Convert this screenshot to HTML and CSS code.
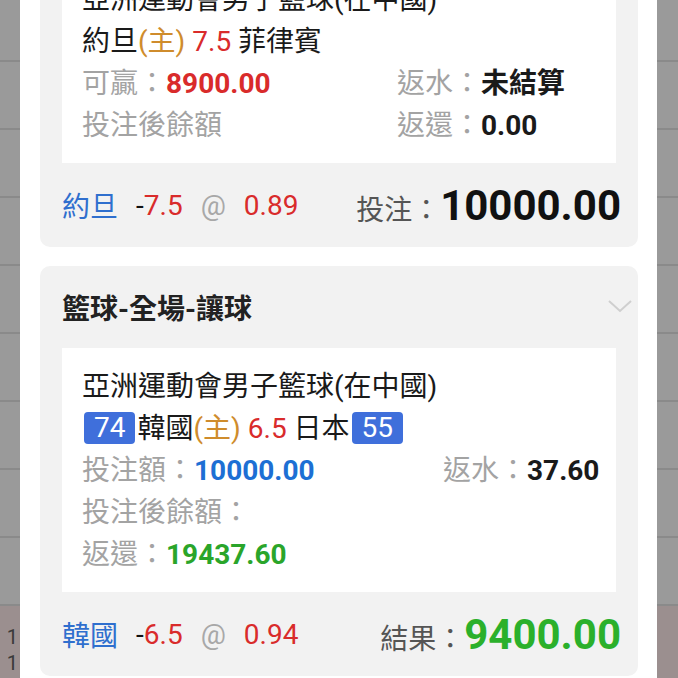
FILE: index.html
```html
<!DOCTYPE html>
<html lang="zh-Hant">
<head>
    <meta charset="UTF-8">
    <meta name="viewport" content="width=device-width, initial-scale=1.0">
    <title>注單詳情</title>
    <link rel="stylesheet" href="styles.css">
</head>
<body>
    <div class="screen">
        <div class="backdrop left">
            <div class="cell first"></div>
            <div class="cell"></div>
            <div class="cell"></div>
            <div class="cell"></div>
            <div class="cell"></div>
            <div class="cell"></div>
            <div class="cell"></div>
            <div class="cell"></div>
            <div class="cell"></div>
            <div class="cell last"><span>1</span><span>1</span></div>
        </div>

        <div class="panel">
            <div class="card cut">
                <div class="detail">
                    <div class="line">亞洲運動會男子籃球(在中國)</div>
                    <div class="line">約旦<span class="home">(主)</span> <span class="red">7.5</span> 菲律賓</div>
                    <div class="grid wide">
                        <div class="line"><span class="label">可贏：</span><b class="red">8900.00</b></div>
                        <div class="line"><span class="label">返水：</span><b>未結算</b></div>
                        <div class="line"><span class="label">投注後餘額</span></div>
                        <div class="line"><span class="label">返還：</span><b>0.00</b></div>
                    </div>
                </div>
                <div class="foot">
                    <div class="pick">
                        <span class="team">約旦</span>
                        <span class="odds">-<span class="red">7.5</span></span>
                        <span class="at">@</span>
                        <span class="red">0.89</span>
                    </div>
                    <div class="total"><span class="label">投注：</span><b>10000.00</b></div>
                </div>
            </div>

            <div class="card">
                <div class="head">
                    <h2>籃球-全場-讓球</h2>
                    <svg class="chevron" width="26" height="16" viewBox="0 0 26 16">
                        <polyline points="2,3 13,13 24,3" fill="none" stroke="#cfcfcf" stroke-width="2"/>
                    </svg>
                </div>
                <div class="detail">
                    <div class="line">亞洲運動會男子籃球(在中國)</div>
                    <div class="line"><span class="score">74</span>韓國<span class="home">(主)</span> <span class="red">6.5</span> 日本<span class="score">55</span></div>
                    <div class="grid narrow">
                        <div class="line"><span class="label">投注額：</span><b class="blue">10000.00</b></div>
                        <div class="line"><span class="label">返水：</span><b>37.60</b></div>
                        <div class="line"><span class="label">投注後餘額：</span></div>
                        <div class="line"></div>
                        <div class="line"><span class="label">返還：</span><b class="green">19437.60</b></div>
                    </div>
                </div>
                <div class="foot">
                    <div class="pick">
                        <span class="team">韓國</span>
                        <span class="odds">-<span class="red">6.5</span></span>
                        <span class="at">@</span>
                        <span class="red">0.94</span>
                    </div>
                    <div class="total"><span class="label">結果：</span><b class="green">9400.00</b></div>
                </div>
            </div>
        </div>

        <div class="backdrop right">
            <div class="cell first"></div>
            <div class="cell"></div>
            <div class="cell"></div>
            <div class="cell"></div>
            <div class="cell"></div>
            <div class="cell"></div>
            <div class="cell"></div>
            <div class="cell"></div>
            <div class="cell"></div>
            <div class="cell last"></div>
        </div>
    </div>
</body>
</html>
```

FILE: styles.css
```css
body {
    margin: 0;
    padding: 0;
    font-family: Roboto, "Noto Sans CJK TC", sans-serif;
    color: #1a1a1a;
    background: #fff;
}
.screen {
    display: flex;
    height: 678px;
    overflow: hidden;
}
.backdrop {
    display: flex;
    flex-direction: column;
    flex-shrink: 0;
    background: #9a9a9a;
}
.backdrop.left {
    width: 20px;
}
.backdrop.right {
    width: 21px;
}
.cell {
    height: 66px;
    border-bottom: 2px solid #8a8a8a;
}
.cell.first {
    height: 60px;
}
.cell.last {
    flex: 1;
    border-bottom: none;
    background: #9b8f8f;
    display: flex;
    flex-direction: column;
    align-items: flex-end;
    padding: 18px 2px 0 0;
    font-size: 20px;
    line-height: 26px;
    color: #3a3a3a;
}
.panel {
    flex: 1;
    min-width: 0;
    background: #fff;
    padding: 0 19px 0 20px;
}
.card {
    background: #f2f2f2;
    border-radius: 10px;
    margin-bottom: 19px;
}
.card.cut {
    margin-top: -39px;
}
.head {
    height: 82px;
    display: flex;
    align-items: center;
    justify-content: space-between;
    padding: 0 5px 0 22px;
}
.head h2 {
    margin: 0;
    font-size: 28px;
    font-weight: bold;
    color: #222;
}
.chevron {
    margin-top: -2px;
}
.detail {
    background: #fff;
    margin: 0 22px;
    padding: 18px 20px 16px;
    font-size: 28px;
    line-height: 42px;
}
.line {
    white-space: nowrap;
}
.grid {
    display: grid;
}
.grid.wide {
    grid-template-columns: 315px auto;
}
.grid.narrow {
    grid-template-columns: 361px auto;
}
.label {
    color: #a3a3a3;
}
.home {
    color: #cf8c2c;
}
.red {
    color: #d92b2b;
}
.blue {
    color: #1d6fd4;
}
.green {
    color: #2aa52a;
}
.score {
    display: inline-block;
    background: #3f6fdb;
    color: #fff;
    border-radius: 4px;
    padding: 0 10px;
    height: 32px;
    line-height: 32px;
    margin: 0 2px;
    vertical-align: 1px;
}
.foot {
    height: 84px;
    display: flex;
    align-items: center;
    justify-content: space-between;
    padding: 0 17px 0 22px;
}
.pick {
    display: flex;
    align-items: center;
    gap: 18px;
    font-size: 28px;
}
.team {
    color: #2f6fce;
}
.odds {
    color: #111;
}
.at {
    color: #a8a8a8;
}
.total {
    font-size: 28px;
    display: flex;
    align-items: baseline;
}
.total .label {
    color: #555;
}
.total b {
    font-size: 42px;
    color: #111;
}
.total b.green {
    color: #2bb02b;
}
```
